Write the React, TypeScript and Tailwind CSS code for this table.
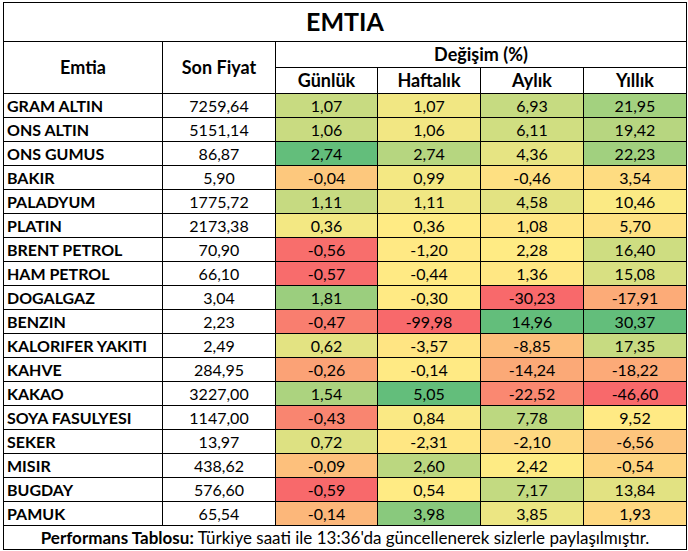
const rows: [string, string, number[]][] = [
  ["GRAM ALTIN", "7259,64", [1.07, 1.07, 6.93, 21.95]],
  ["ONS ALTIN", "5151,14", [1.06, 1.06, 6.11, 19.42]],
  ["ONS GUMUS", "86,87", [2.74, 2.74, 4.36, 22.23]],
  ["BAKIR", "5,90", [-0.04, 0.99, -0.46, 3.54]],
  ["PALADYUM", "1775,72", [1.11, 1.11, 4.58, 10.46]],
  ["PLATIN", "2173,38", [0.36, 0.36, 1.08, 5.7]],
  ["BRENT PETROL", "70,90", [-0.56, -1.2, 2.28, 16.4]],
  ["HAM PETROL", "66,10", [-0.57, -0.44, 1.36, 15.08]],
  ["DOGALGAZ", "3,04", [1.81, -0.3, -30.23, -17.91]],
  ["BENZIN", "2,23", [-0.47, -99.98, 14.96, 30.37]],
  ["KALORIFER YAKITI", "2,49", [0.62, -3.57, -8.85, 17.35]],
  ["KAHVE", "284,95", [-0.26, -0.14, -14.24, -18.22]],
  ["KAKAO", "3227,00", [1.54, 5.05, -22.52, -46.6]],
  ["SOYA FASULYESI", "1147,00", [-0.43, 0.84, 7.78, 9.52]],
  ["SEKER", "13,97", [0.72, -2.31, -2.1, -6.56]],
  ["MISIR", "438,62", [-0.09, 2.6, 2.42, -0.54]],
  ["BUGDAY", "576,60", [-0.59, 0.54, 7.17, 13.84]],
  ["PAMUK", "65,54", [-0.14, 3.98, 3.85, 1.93]],
]

const RED = [248, 105, 107]
const YELLOW = [255, 235, 132]
const GREEN = [99, 190, 123]

function mix(a: number[], b: number[], t: number) {
  const c = a.map((v, i) => Math.round(v + (b[i] - v) * t))
  return `rgb(${c[0]}, ${c[1]}, ${c[2]})`
}

// excel style 3-colour scale per column (min / median / max)
function scaleFor(values: number[]) {
  const s = [...values].sort((a, b) => a - b)
  const min = s[0]
  const max = s[s.length - 1]
  const mid = (s[s.length / 2 - 1] + s[s.length / 2]) / 2
  return (v: number) =>
    v <= mid ? mix(RED, YELLOW, (v - min) / (mid - min)) : mix(YELLOW, GREEN, (v - mid) / (max - mid))
}

const scales = [0, 1, 2, 3].map((c) => scaleFor(rows.map((r) => r[2][c])))

const fmt = (v: number) => v.toFixed(2).replace(".", ",")

export default function App() {
  return (
    <div className="bg-white w-[688px] h-[551px] pt-[2px] pl-[3px] font-['Lato',sans-serif] text-black">
      <div className="grid grid-cols-[158px_112px_101px_102px_102px_102px] grid-rows-[38px_25px_25px_repeat(18,23px)_23px] gap-px p-px bg-black w-[684px]">
        <div className="col-span-6 bg-white flex items-center justify-center text-[25px] font-bold">EMTIA</div>

        <div className="row-span-2 bg-white flex items-center justify-center text-[18px] font-bold">Emtia</div>
        <div className="row-span-2 bg-white flex items-center justify-center text-[18px] font-bold">Son Fiyat</div>
        <div className="col-span-4 bg-white flex items-center justify-center text-[18px] font-bold">Değişim (%)</div>
        <div className="bg-white flex items-center justify-center text-[18px] font-bold">Günlük</div>
        <div className="bg-white flex items-center justify-center text-[18px] font-bold">Haftalık</div>
        <div className="bg-white flex items-center justify-center text-[18px] font-bold">Aylık</div>
        <div className="bg-white flex items-center justify-center text-[18px] font-bold">Yıllık</div>

        {rows.map(([name, price, changes]) => (
          <div key={name} className="contents">
            <div className="bg-white flex items-center pl-[3px] text-[16px] font-bold">{name}</div>
            <div className="bg-white flex items-center justify-center text-[16px]">{price}</div>
            {changes.map((v, i) => (
              <div
                key={i}
                className="flex items-center justify-center text-[16px]"
                style={{ backgroundColor: scales[i](v) }}
              >
                {fmt(v)}
              </div>
            ))}
          </div>
        ))}

        <div className="col-span-6 bg-white flex items-center justify-center text-[17px]">
          <span className="font-bold mr-1">Performans Tablosu:</span>
          Türkiye saati ile 13:36'da güncellenerek sizlerle paylaşılmıştır.
        </div>
      </div>
    </div>
  )
}
